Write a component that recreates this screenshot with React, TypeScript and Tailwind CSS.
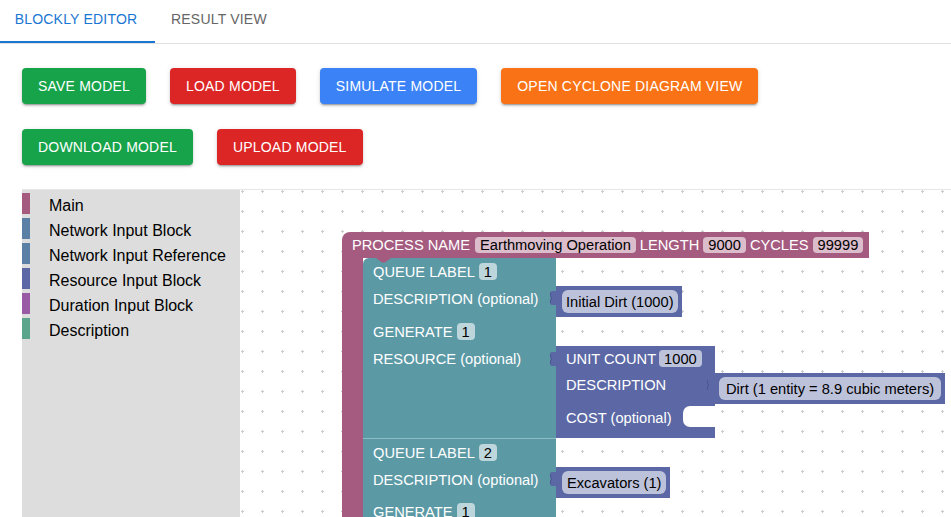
import React from 'react';

const buttonRows = [
  [
    { label: 'Save Model', color: 'bg-[#16a34a]' },
    { label: 'Load Model', color: 'bg-[#dc2626]' },
    { label: 'Simulate Model', color: 'bg-[#3b82f6]' },
    { label: 'Open Cyclone Diagram View', color: 'bg-[#f97316]' },
  ],
  [
    { label: 'Download Model', color: 'bg-[#16a34a]' },
    { label: 'Upload Model', color: 'bg-[#dc2626]' },
  ],
];

const categories = [
  { name: 'Main', color: 'bg-[#a55b80]' },
  { name: 'Network Input Block', color: 'bg-[#5b80a5]' },
  { name: 'Network Input Reference', color: 'bg-[#5b80a5]' },
  { name: 'Resource Input Block', color: 'bg-[#5b68a5]' },
  { name: 'Duration Input Block', color: 'bg-[#995ba5]' },
  { name: 'Description', color: 'bg-[#5ba58d]' },
];

function Field({ children, h = 'h-[17px]' }: { children: React.ReactNode; h?: string }) {
  return (
    <span className={`flex ${h} items-center rounded-[4px] bg-white/60 px-[5px] pt-[1px] text-black`}>
      {children}
    </span>
  );
}

// puzzle tab on the left of a value block
function Tab({ className }: { className: string }) {
  return (
    <svg width="8" height="14" viewBox="0 0 8 14" className={`absolute -left-[7px] ${className}`}>
      <path d="M8 0H3Q1 0 1 2V4.5Q3 7 1 9.5V12Q1 14 3 14H8Z" fill="#5b68a5" />
      <path d="M1.5 2V4.5Q3.5 7 1.5 9.5V12" stroke="#4a5590" strokeWidth="1" fill="none" />
    </svg>
  );
}

function ValueBlock({ text, pad = 'px-[4px]' }: { text: string; pad?: string }) {
  return (
    <div className="relative bg-[#5b68a5] py-[4px] pl-[6px] pr-[4px]">
      <Tab className="top-[5px]" />
      <div className={`flex h-[23px] items-center whitespace-nowrap rounded-[6px] bg-white/60 pt-[2px] text-black ${pad}`}>
        {text}
      </div>
    </div>
  );
}

function ResourceBlock() {
  return (
    <div className="relative mt-[1px] w-[159px]">
      <Tab className="top-[6px]" />
      <div className="flex h-[26px] items-start gap-[3px] bg-[#5b68a5] pl-[10px] pt-[4px]">
        <span className="pt-[1px]">UNIT COUNT</span>
        <Field>1000</Field>
      </div>
      <div className="relative h-[34px] bg-[#5b68a5] pl-[10px] pt-[5px]">
        DESCRIPTION
        <div className="absolute left-[157px] top-[1px]">
          <ValueBlock text="Dirt (1 entity = 8.9 cubic meters)" pad="px-[7px]" />
        </div>
      </div>
      <div className="relative h-[32px] bg-[#5b68a5] pl-[10px] pt-[4px]">
        COST (optional)
        <div className="absolute right-0 top-0 h-[21px] w-[32px] rounded-l-[7px] bg-white" />
      </div>
    </div>
  );
}

function Notch() {
  return (
    <svg width="15" height="5" viewBox="0 0 15 5" className="absolute left-[13px] top-0">
      <path d="M0 0L6 4.5H9L15 0Z" fill="#a55b80" />
    </svg>
  );
}

function ProcessBlock() {
  return (
    <div className="absolute left-[102px] top-[42px] flex flex-col items-start whitespace-nowrap text-[14.67px] leading-[17px] text-white">
      <div className="flex h-[26px] items-center gap-[4px] rounded-tl-[8px] bg-[#a55b80] pl-[10px] pr-[6px]">
        <span className="mr-[1px]">PROCESS NAME</span>
        <Field h="h-[16px]">Earthmoving Operation</Field>
        <span>LENGTH</span>
        <Field h="h-[16px]">9000</Field>
        <span>CYCLES</span>
        <Field h="h-[16px]">99999</Field>
      </div>
      <div className="flex">
        <div className="w-[21px] bg-[#a55b80]" />
        <div className="flex flex-col">
          {/* queue 1 */}
          <div className="relative flex h-[28px] w-[193px] items-start gap-[4px] rounded-tl-[6px] bg-[#5b99a5] pl-[10px] pt-[5px]">
            <Notch />
            <span className="pt-[1px]">QUEUE LABEL</span>
            <Field>1</Field>
          </div>
          <div className="flex items-start">
            <div className="h-[32px] w-[193px] bg-[#5b99a5] pl-[10px] pt-[5px]">DESCRIPTION (optional)</div>
            <ValueBlock text="Initial Dirt (1000)" />
          </div>
          <div className="flex h-[27px] w-[193px] items-start gap-[4px] bg-[#5b99a5] pl-[10px] pt-[5px]">
            <span className="pt-[1px]">GENERATE</span>
            <Field>1</Field>
          </div>
          <div className="flex items-start">
            <div className="h-[93px] w-[193px] bg-[#5b99a5] pl-[10px] pt-[6px]">RESOURCE (optional)</div>
            <ResourceBlock />
          </div>
          {/* queue 2 */}
          <div className="relative flex h-[28px] w-[193px] items-start gap-[4px] border-t border-[#8dbcc4] bg-[#5b99a5] pl-[10px] pt-[5px]">
            <span className="pt-[1px]">QUEUE LABEL</span>
            <Field>2</Field>
          </div>
          <div className="flex items-start">
            <div className="h-[32px] w-[193px] bg-[#5b99a5] pl-[10px] pt-[6px]">DESCRIPTION (optional)</div>
            <div className="mt-[1px]">
              <ValueBlock text="Excavators (1)" pad="px-[5px]" />
            </div>
          </div>
          <div className="flex h-[27px] w-[193px] items-start gap-[4px] bg-[#5b99a5] pl-[10px] pt-[5px]">
            <span className="pt-[1px]">GENERATE</span>
            <Field>1</Field>
          </div>
          <div className="h-[40px] w-[193px] bg-[#5b99a5]" />
        </div>
      </div>
    </div>
  );
}

export default function App() {
  return (
    <div className="flex h-screen w-full flex-col overflow-hidden bg-white font-['Liberation_Sans',Arial,sans-serif]">
      {/* tabs */}
      <div className="flex h-[44px] shrink-0 border-b border-[#e0e0e0] text-[14px] leading-[16px] tracking-[0.2px]">
        <div className="relative flex h-[43px] w-[155px] justify-center pr-[3px] pt-[11px] text-[#1976d2]">
          BLOCKLY EDITOR
          <span className="absolute bottom-0 left-0 h-[2px] w-full bg-[#1976d2]" />
        </div>
        <div className="flex h-[43px] px-[16px] pt-[11px] text-[#666666]">RESULT VIEW</div>
      </div>

      {/* action buttons */}
      <div className="flex shrink-0 flex-col gap-[25px] pl-[22px] pt-[24px]">
        {buttonRows.map((row, i) => (
          <div key={i} className="flex gap-[24px]">
            {row.map((b) => (
              <button
                key={b.label}
                className={`h-[36px] rounded-[4px] px-[16px] text-[14px] uppercase tracking-[0.2px] text-white shadow-[0_3px_1px_-2px_rgba(0,0,0,0.2),0_2px_2px_0_rgba(0,0,0,0.14),0_1px_5px_0_rgba(0,0,0,0.12)] ${b.color}`}
              >
                {b.label}
              </button>
            ))}
          </div>
        ))}
      </div>

      {/* blockly workspace */}
      <div className="ml-[22px] mt-[24px] flex min-h-0 flex-1 border-t border-[#e6e6e6]">
        <div className="w-[218px] shrink-0 bg-[#dddddd] pt-[1px]">
          {categories.map((c) => (
            <div key={c.name} className="flex h-[25px] items-center">
              <span className={`h-[21px] w-[8px] ${c.color}`} />
              <span className="ml-[19px] mt-[4px] text-[16px] text-black">{c.name}</span>
            </div>
          ))}
        </div>
        <div className="relative flex-1 overflow-hidden">
          <svg className="absolute inset-0 h-full w-full">
            <defs>
              <pattern id="grid" width="20" height="20" x="-8" y="-9" patternUnits="userSpaceOnUse">
                <rect x="9" y="10" width="3" height="1" fill="#cccccc" />
                <rect x="10" y="9" width="1" height="3" fill="#cccccc" />
              </pattern>
            </defs>
            <rect width="100%" height="100%" fill="url(#grid)" />
          </svg>
          <ProcessBlock />
        </div>
      </div>
    </div>
  );
}
